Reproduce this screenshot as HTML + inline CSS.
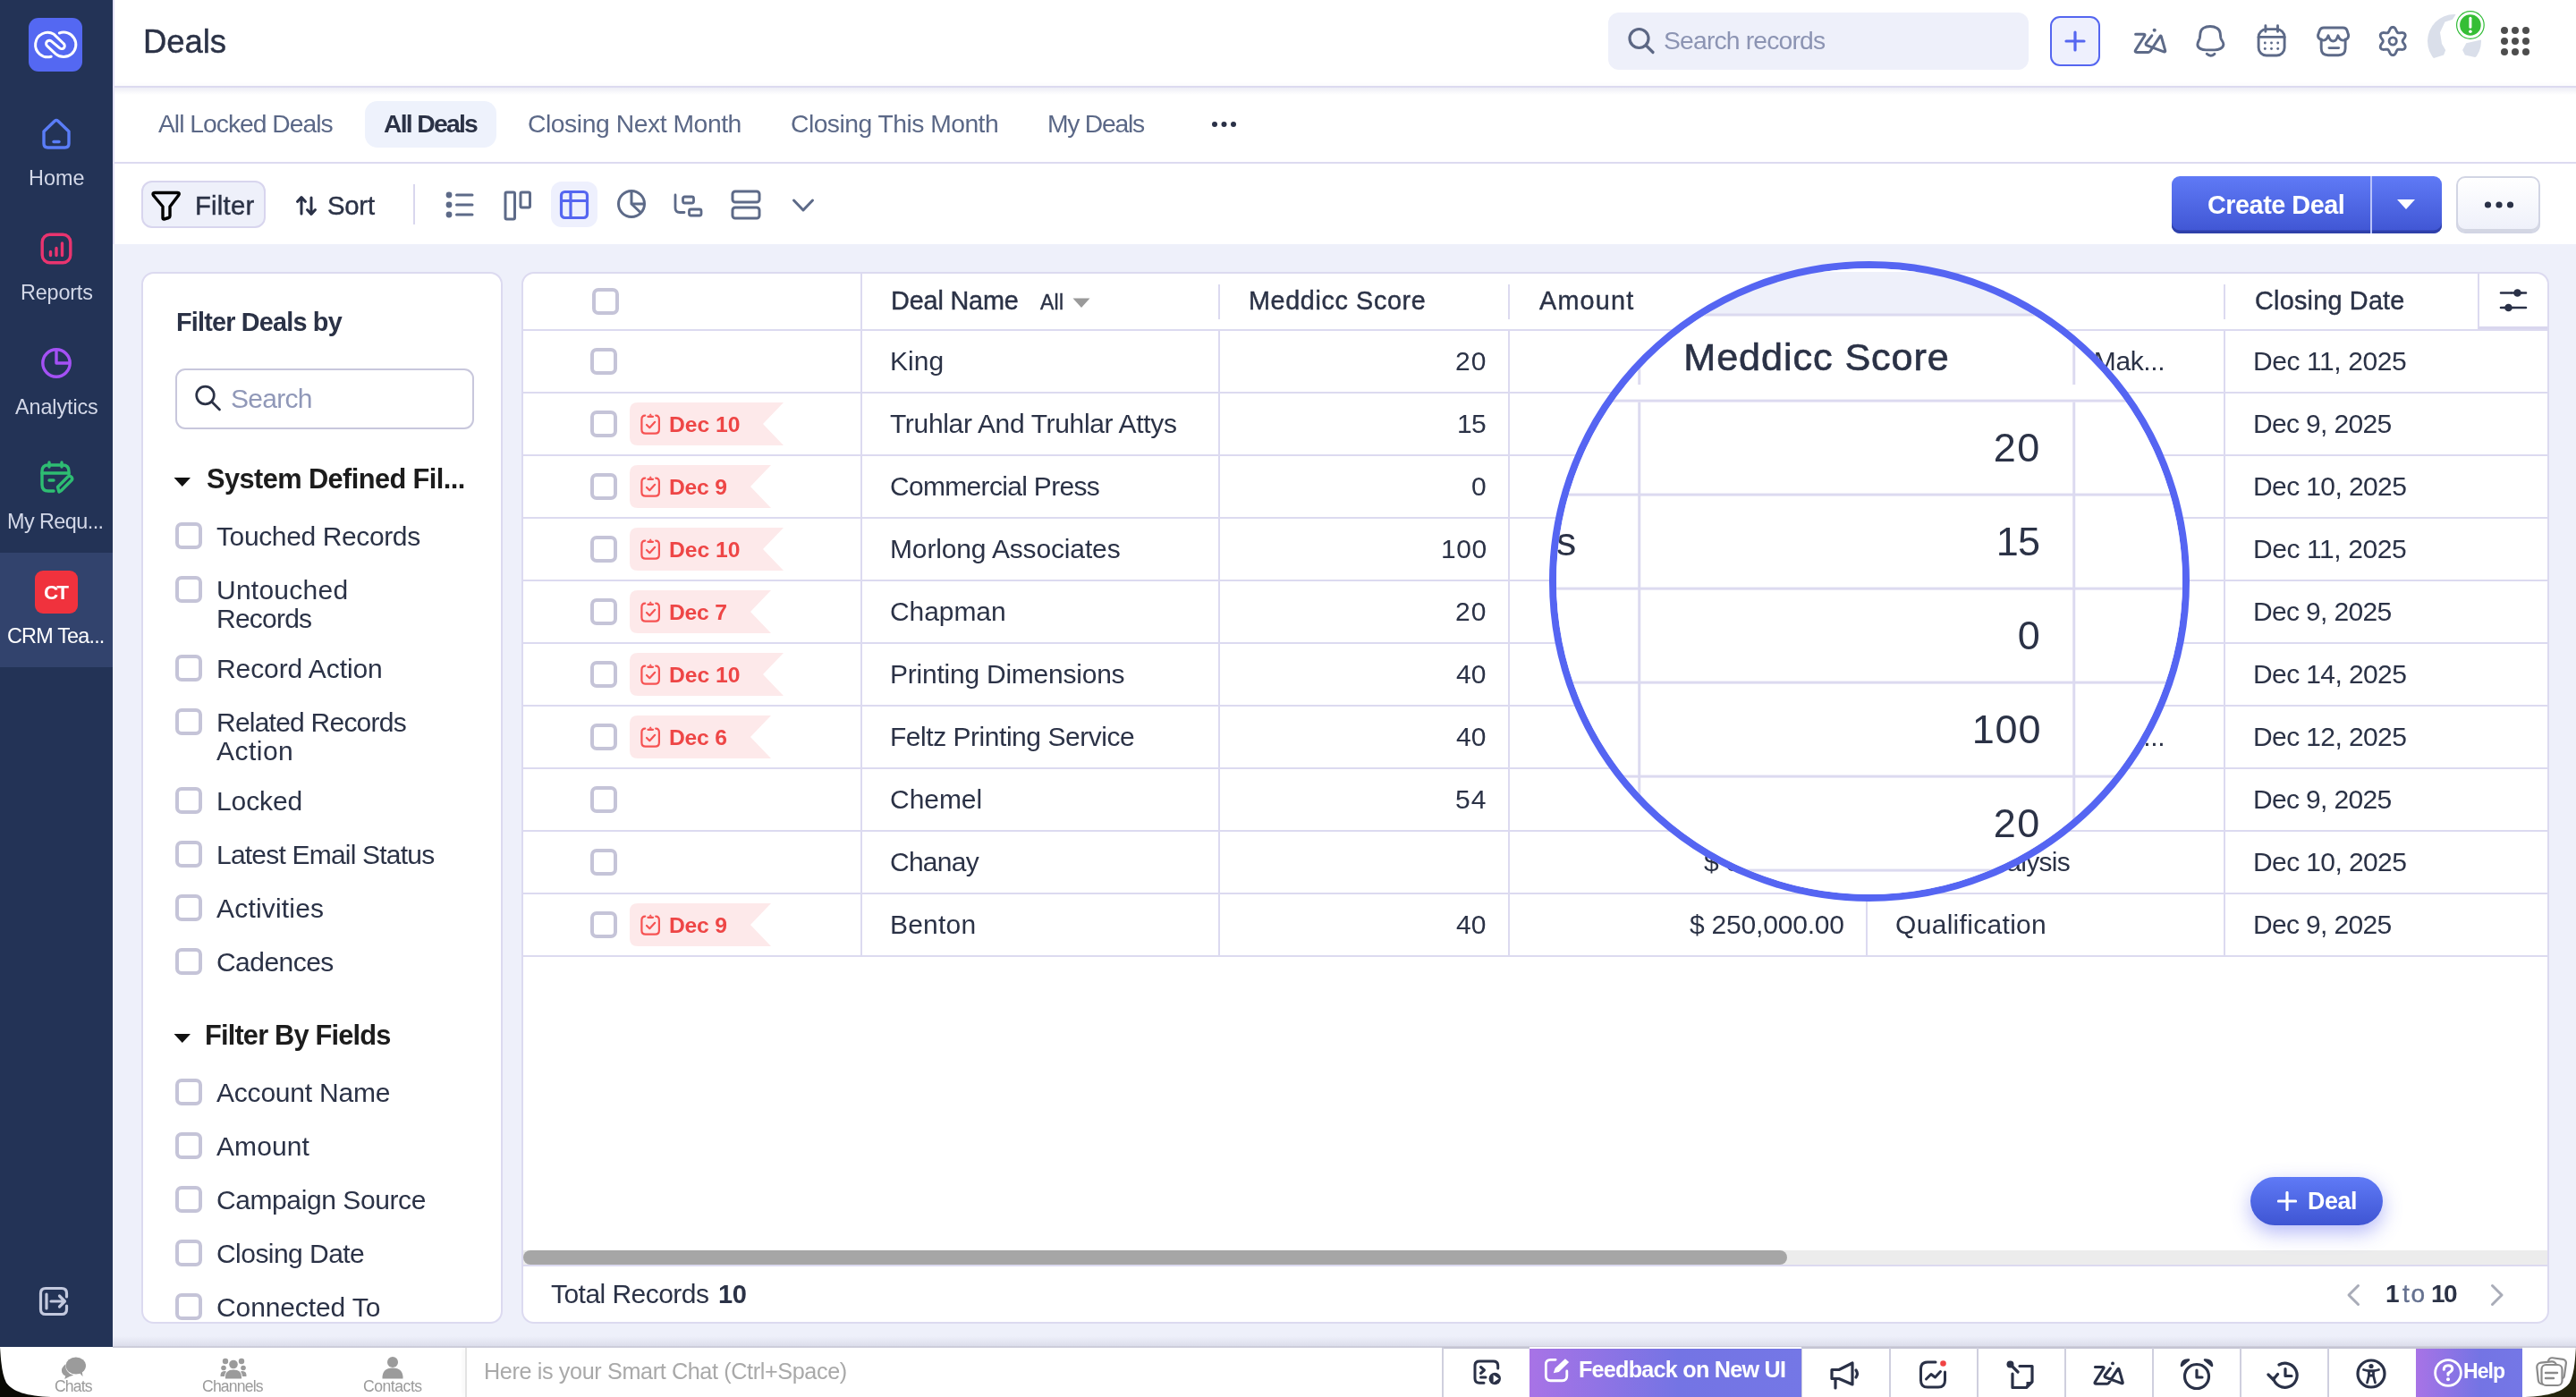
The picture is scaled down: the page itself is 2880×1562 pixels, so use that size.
<!DOCTYPE html>
<html lang="en"><head><meta charset="utf-8"><title>Deals - Zoho CRM</title>
<style>
*{margin:0;padding:0;box-sizing:border-box}
html,body{width:2880px;height:1562px;background:#eef0fa}
body{font-family:"Liberation Sans", sans-serif;color:#2b3246;position:relative}
#root{position:absolute;left:0;top:0;width:2880px;height:1562px;overflow:hidden;-webkit-font-smoothing:antialiased}
#root div,#root span,#root svg{position:absolute}
#root span{white-space:nowrap;display:block;will-change:transform}
.cb{width:30px;height:30px;border:4px solid #c5c4d8;border-radius:7px;background:#fff}
.m{-webkit-text-stroke:0.42px currentColor}
</style></head>
<body><div id="root">
<div style="left:126px;top:0px;width:2754px;height:97px;background:#fff;"></div>
<div style="left:126px;top:96px;width:2754px;height:2px;background:#dcdaf0;box-shadow:0 2px 6px rgba(120,120,180,.18);"></div>
<div style="left:126px;top:98px;width:2754px;height:83px;background:#fff;"></div>
<div style="left:126px;top:181px;width:2754px;height:2px;background:#dcdaf0;"></div>
<div style="left:126px;top:183px;width:2754px;height:90px;background:#fff;"></div>
<div style="left:126px;top:98px;width:2754px;height:8px;background:linear-gradient(rgba(120,120,180,.13),rgba(120,120,180,0));"></div>
<div style="left:126px;top:0px;width:2px;height:273px;background:#e4e2f6;"></div>
<div style="left:0px;top:0px;width:126px;height:1506px;background:#233356;"></div>
<div style="left:0px;top:618px;width:126px;height:128px;background:#32436d;"></div>
<div style="left:32px;top:20px;width:60px;height:60px;background:#5468f2;border-radius:11px;"></div>
<svg style="left:32px;top:20px;" width="60" height="60" viewBox="0 0 60 60" fill="none"><path d="M25.2 43.2 A13.7 13.7 0 1 1 28.3 18.3 L39.12 28.77 A3.3 3.3 0 0 1 34.88 33.83 L25.5 26.1 A3.6 3.6 0 0 0 20.9 31.66 L30.3 40.3 A13.7 13.7 0 1 0 34.35 17" stroke="#fff" stroke-width="3" stroke-linecap="round" stroke-linejoin="round" fill="none"/></svg>
<svg style="left:45px;top:131px;" width="36" height="38" viewBox="0 0 36 38" fill="none"><path d="M4 16 L16.2 4.2 Q18 2.6 19.8 4.2 L32 16 V29.5 Q32 34 27.5 34 H8.5 Q4 34 4 29.5 Z" stroke="#5a7df8" stroke-width="3.4" stroke-linejoin="round"/>
<path d="M15 27.5 H21" stroke="#5a7df8" stroke-width="3.4" stroke-linecap="round"/></svg>
<span style="left:32.45px;top:181.06px;line-height:36px;font-size:23.4px;color:#d3d8e8;letter-spacing:0.033px;">Home</span>
<svg style="left:45px;top:260px;" width="36" height="36" viewBox="0 0 36 36" fill="none"><rect x="2.2" y="2.2" width="31.6" height="31.6" rx="8.5" stroke="#e9346f" stroke-width="3.4"/>
<path d="M11.5 25.5 V21.5 M18 25.5 V17.5 M24.5 25.5 V12" stroke="#e9346f" stroke-width="3.4" stroke-linecap="round"/></svg>
<span style="left:22.50px;top:309.06px;line-height:36px;font-size:23.4px;color:#d3d8e8;letter-spacing:-0.167px;">Reports</span>
<svg style="left:45px;top:388px;" width="36" height="36" viewBox="0 0 36 36" fill="none"><circle cx="18" cy="18" r="15.2" stroke="#a451f5" stroke-width="3.4"/>
<path d="M18 3 V18 H33" stroke="#a451f5" stroke-width="3.4" stroke-linejoin="round" fill="none"/></svg>
<span style="left:17.20px;top:437.06px;line-height:36px;font-size:23.4px;color:#d3d8e8;letter-spacing:-0.100px;">Analytics</span>
<svg style="left:44px;top:515px;" width="40" height="38" viewBox="0 0 40 38" fill="none"><g stroke="#2ebd72" stroke-width="3.4" stroke-linecap="round" stroke-linejoin="round" fill="none">
<path d="M16 34 H10 Q3 34 3 27 V12 Q3 5 10 5 H26 Q33 5 33 12 V15"/>
<path d="M3 14 H33"/><path d="M11 2 V7 M25 2 V7"/><path d="M11 22 H16"/>
<path d="M22 35 L20.5 29.5 L32 18 Q34 16.5 36 18.5 Q37.5 20.5 36 22 L24.5 33.5 Z"/></g></svg>
<span style="left:7.50px;top:565.06px;line-height:36px;font-size:23.4px;color:#d3d8e8;letter-spacing:-0.556px;">My Requ...</span>
<div style="left:39px;top:638px;width:48px;height:48px;background:#f0323d;border-radius:9px;"></div>
<span style="left:49.20px;top:647.56px;line-height:30px;font-size:22.5px;color:#fff;font-weight:700;letter-spacing:-2.100px;">CT</span>
<span style="left:7.60px;top:693.06px;line-height:36px;font-size:23.4px;color:#fff;letter-spacing:-0.800px;">CRM Tea...</span>
<svg style="left:43px;top:1437.5px;" width="35" height="35" viewBox="0 0 35 35" fill="none"><g stroke="#c3c9de" stroke-width="3.2" stroke-linecap="round" stroke-linejoin="round" fill="none">
<path d="M31.5 12 V8 Q31.5 2.5 26 2.5 H8 Q2.5 2.5 2.5 8 V26 Q2.5 31.5 8 31.5 H26 Q31.5 31.5 31.5 26 V22"/>
<path d="M9 9 V25"/><path d="M14 17 H29 M23.5 11 L29.5 17 L23.5 23"/></g></svg>
<span class="m" style="left:159.80px;top:21.56px;line-height:50px;font-size:36.5px;color:#2b3246;letter-spacing:-0.100px;">Deals</span>
<div style="left:1798px;top:14px;width:470px;height:64px;background:#eef0fa;border-radius:12px;"></div>
<svg style="left:1818px;top:28px;" width="36" height="36" viewBox="0 0 36 36" fill="none"><circle cx="14.5" cy="15" r="10.5" stroke="#5c6784" stroke-width="3.2"/><path d="M22.5 23 L30 30.5" stroke="#5c6784" stroke-width="3.2" stroke-linecap="round"/></svg>
<span style="left:1860.00px;top:25.06px;line-height:40px;font-size:28.3px;color:#8c94b3;letter-spacing:-0.823px;">Search records</span>
<div style="left:2292px;top:18px;width:56px;height:56px;background:#eef0fd;border:2.5px solid #5566f0;border-radius:11px;"></div>
<svg style="left:2292px;top:18px;" width="56" height="56" viewBox="0 0 56 56" fill="none"><path d="M28 18 V38 M18 28 H38" stroke="#5566f0" stroke-width="3.2" stroke-linecap="round"/></svg>
<svg style="left:2385px;top:28px;" width="38" height="34" viewBox="0 0 38 34" fill="none"><path d="M2.6 10.2 H11.5 Q13.8 10.2 12.6 12.2 L2.6 28 Q1.2 30.4 4 30.4 H17 Q18.3 30.4 19 29.3 L30 12.6 Q30.8 11.4 31.3 12.8 L35.7 28.4 Q36.2 30.4 34.2 29.8 L15.6 22.9 Q13.2 22 14.5 19.9 L20.8 11.8" stroke="#5d6a88" stroke-width="3" stroke-linecap="round" stroke-linejoin="round" fill="none"/>
<circle cx="23.7" cy="5.8" r="2.05" fill="#5d6a88"/></svg>
<svg style="left:2453px;top:26px;" width="36" height="40" viewBox="0 0 36 40" fill="none"><g stroke="#5d6a88" stroke-width="2.9" stroke-linecap="round" stroke-linejoin="round" fill="none">
<path d="M18 3.5 C24 3.5 28.6 6.5 29.2 11 L29.8 16.4 C30.2 19 32.9 20.5 32.9 23.5 C32.9 28 27 29.9 23 29.9 H13.5 C9 29.9 3.6 28 3.9 23.5 C4 20.5 6 19 6.4 16.4 L7 11 C7.6 6.5 12 3.5 18 3.5 Z"/>
<path d="M14.3 34.3 Q18.5 38.2 22.9 34.3"/></g></svg>
<svg style="left:2522px;top:27px;" width="36" height="38" viewBox="0 0 36 38" fill="none"><g stroke="#5d6a88" stroke-width="2.9" stroke-linecap="round" stroke-linejoin="round" fill="none">
<rect x="3.1" y="5.6" width="29" height="29.4" rx="8.8"/><path d="M3.1 14.4 H32.1"/><path d="M10.9 1.8 V8.3 M24.5 1.8 V8.3"/></g>
<g fill="#5d6a88"><circle cx="10.3" cy="21" r="1.45"/><circle cx="17.5" cy="21" r="1.45"/><circle cx="24.7" cy="21" r="1.45"/>
<circle cx="10.3" cy="27.5" r="1.45"/><circle cx="17.5" cy="27.5" r="1.45"/><circle cx="24.7" cy="27.5" r="1.45"/></g></svg>
<svg style="left:2590px;top:28px;" width="38" height="36" viewBox="0 0 38 36" fill="none"><g stroke="#5d6a88" stroke-width="2.9" stroke-linecap="round" stroke-linejoin="round" fill="none">
<path d="M5.2 16.5 Q1 15 1.6 11 L3.4 6 Q4.5 3 8 3 H29.5 Q33 3 34 6 L35.6 11 Q36 15 32.1 16.5"/>
<path d="M5.2 16 V26 Q5.2 33.7 13 33.7 H24.3 Q32.1 33.7 32.1 26 V16"/>
<path d="M5.2 16.5 Q10.5 19 13.1 11.8 Q15 18 18.5 18 Q22 18 23.9 11.8 Q26.5 19 32.1 16.5"/>
<path d="M14 25.6 H24.7"/></g></svg>
<svg style="left:2657px;top:28px;" width="36" height="36" viewBox="0 0 36 36" fill="none"><path d="M29.10 18.00 L29.25 18.72 L29.66 19.51 L30.26 20.40 L31.05 21.44 L31.74 22.60 L32.10 23.76 L32.13 24.87 L31.80 25.85 L31.11 26.63 L30.14 27.16 L28.95 27.43 L27.60 27.40 L26.31 27.25 L25.23 27.17 L24.35 27.20 L23.65 27.44 L23.10 27.93 L22.62 28.68 L22.15 29.64 L21.64 30.85 L20.99 32.03 L20.16 32.92 L19.22 33.50 L18.20 33.70 L17.18 33.50 L16.24 32.92 L15.41 32.03 L14.76 30.85 L14.25 29.64 L13.78 28.68 L13.30 27.93 L12.75 27.44 L12.05 27.20 L11.17 27.17 L10.09 27.25 L8.80 27.40 L7.45 27.43 L6.26 27.16 L5.29 26.63 L4.60 25.85 L4.27 24.87 L4.30 23.76 L4.66 22.60 L5.35 21.44 L6.14 20.40 L6.74 19.51 L7.15 18.72 L7.30 18.00 L7.15 17.28 L6.74 16.49 L6.14 15.60 L5.35 14.56 L4.66 13.40 L4.30 12.24 L4.27 11.13 L4.60 10.15 L5.29 9.37 L6.26 8.84 L7.45 8.57 L8.80 8.60 L10.09 8.75 L11.17 8.83 L12.05 8.80 L12.75 8.56 L13.30 8.07 L13.78 7.32 L14.25 6.36 L14.76 5.15 L15.41 3.97 L16.24 3.08 L17.18 2.50 L18.20 2.30 L19.22 2.50 L20.16 3.08 L20.99 3.97 L21.64 5.15 L22.15 6.36 L22.62 7.32 L23.10 8.07 L23.65 8.56 L24.35 8.80 L25.23 8.83 L26.31 8.75 L27.60 8.60 L28.95 8.57 L30.14 8.84 L31.11 9.37 L31.80 10.15 L32.13 11.13 L32.10 12.24 L31.74 13.40 L31.05 14.56 L30.26 15.60 L29.66 16.49 L29.25 17.28 Z" stroke="#5d6a88" stroke-width="2.9" stroke-linejoin="round"/><circle cx="18.2" cy="18" r="4.1" stroke="#5d6a88" stroke-width="2.9"/></svg>
<svg style="left:2710px;top:10px;" width="70" height="62" viewBox="0 0 70 62" fill="none"><defs><clipPath id="avc"><circle cx="34" cy="36" r="30"/></clipPath></defs>
<circle cx="34" cy="36" r="30" fill="#dadfea"/>
<path d="M35.4 0 L35.4 6.4 L31.9 11.7 L23.5 14.5 L18 26.3 L20 38.9 L24.2 45.9 L22.1 51.5 L11 55 L-2 72 H72 V-2 Z" fill="#fff"/>
<g clip-path="url(#avc)"><path d="M47.3 38.2 L66 34 V50 L57.1 53.9 L45.9 51.5 L43.1 45.9 Z" fill="#dadfea"/></g>
<circle cx="51.9" cy="18" r="17.6" fill="#fff"/>
<circle cx="51.9" cy="18" r="15.3" fill="none" stroke="#2fbb35" stroke-width="1.2"/>
<circle cx="51.9" cy="18" r="11.8" fill="#35be35"/>
<path d="M51.9 10.3 V20.3" stroke="#fff" stroke-width="3" stroke-linecap="round"/><circle cx="51.9" cy="25.3" r="1.8" fill="#fff"/></svg>
<svg style="left:2795px;top:29px;" width="34" height="34" viewBox="0 0 34 34" fill="none"><circle cx="5" cy="5" r="4" fill="#4d4d4d"/><circle cx="5" cy="17" r="4" fill="#4d4d4d"/><circle cx="5" cy="29" r="4" fill="#4d4d4d"/><circle cx="17" cy="5" r="4" fill="#4d4d4d"/><circle cx="17" cy="17" r="4" fill="#4d4d4d"/><circle cx="17" cy="29" r="4" fill="#4d4d4d"/><circle cx="29" cy="5" r="4" fill="#4d4d4d"/><circle cx="29" cy="17" r="4" fill="#4d4d4d"/><circle cx="29" cy="29" r="4" fill="#4d4d4d"/></svg>
<div style="left:408px;top:113px;width:147px;height:52px;background:#eef2fc;border-radius:14px;"></div>
<span style="left:176.90px;top:118.06px;line-height:40px;font-size:28.3px;color:#5b6887;letter-spacing:-1.007px;">All Locked Deals</span>
<span style="left:428.70px;top:118.06px;line-height:40px;font-size:28.3px;color:#2b3246;font-weight:700;letter-spacing:-1.713px;">All Deals</span>
<span style="left:590.00px;top:118.06px;line-height:40px;font-size:28.3px;color:#5b6887;letter-spacing:-0.447px;">Closing Next Month</span>
<span style="left:884.00px;top:118.06px;line-height:40px;font-size:28.3px;color:#5b6887;letter-spacing:-0.529px;">Closing This Month</span>
<span style="left:1170.80px;top:118.06px;line-height:40px;font-size:28.3px;color:#5b6887;letter-spacing:-1.257px;">My Deals</span>
<svg style="left:1354px;top:134px;" width="30" height="10" viewBox="0 0 30 10" fill="none"><circle cx="4" cy="5" r="3" fill="#2a3147"/><circle cx="14.500" cy="5" r="3" fill="#2a3147"/><circle cx="25" cy="5" r="3" fill="#2a3147"/></svg>
<div style="left:158px;top:202px;width:139px;height:53px;background:#eef0fa;border:2px solid #d8d5ee;border-radius:12px;"></div>
<svg style="left:168px;top:211px;" width="36" height="38" viewBox="0 0 36 38" fill="none"><path d="M5 4.500 H30.500 Q33.500 4.500 31.500 7.500 L22 20 V30.500 Q22 32 20.500 32.500 L15.500 34 Q14 34.300 14 32.500 V20 L3.500 7.500 Q2 4.500 5 4.500 Z" stroke="#000" stroke-width="3.400" stroke-linejoin="round"/></svg>
<span class="m" style="left:217.80px;top:209.56px;line-height:40px;font-size:29.3px;color:#2b3246;letter-spacing:0.220px;">Filter</span>
<svg style="left:330px;top:217px;" width="26" height="26" viewBox="0 0 26 26" fill="none"><g stroke="#2a3147" stroke-width="3" stroke-linecap="round" stroke-linejoin="round" fill="none">
<path d="M7 22 V4 M2.5 8.5 L7 3.5 L11.5 8.5"/><path d="M18 4 V22 M13.5 17.5 L18 22.5 L22.5 17.5"/></g></svg>
<span class="m" style="left:365.50px;top:209.56px;line-height:40px;font-size:29.3px;color:#2b3246;letter-spacing:-0.233px;">Sort</span>
<div style="left:462px;top:206px;width:2px;height:45px;background:#d9d7ee;"></div>
<svg style="left:497px;top:212px;" width="34" height="34" viewBox="0 0 34 34" fill="none"><g fill="#5d6a88"><circle cx="5" cy="6" r="3.400"/><circle cx="5" cy="17" r="3.400"/><circle cx="5" cy="28" r="3.400"/></g>
<path d="M13.500 6 H31 M13.500 17 H31 M13.500 28 H31" stroke="#5d6a88" stroke-width="3" stroke-linecap="round"/></svg>
<svg style="left:563px;top:213px;" width="32" height="34" viewBox="0 0 32 34" fill="none"><rect x="2" y="2" width="10.500" height="30" rx="1.500" stroke="#5d6a88" stroke-width="3"/><rect x="19" y="2" width="10.500" height="17" rx="1.500" stroke="#5d6a88" stroke-width="3"/></svg>
<div style="left:616px;top:203px;width:52px;height:51px;background:#eef0fd;border-radius:12px;"></div>
<svg style="left:625px;top:212px;" width="34" height="34" viewBox="0 0 34 34" fill="none"><rect x="2.500" y="2.500" width="29" height="29" rx="4" stroke="#5566f0" stroke-width="3.200"/><path d="M2.500 12.500 H31.500 M13 2.500 V31.500" stroke="#5566f0" stroke-width="3.200"/></svg>
<svg style="left:689px;top:211px;" width="34" height="34" viewBox="0 0 34 34" fill="none"><circle cx="17" cy="17" r="14.500" stroke="#5d6a88" stroke-width="3"/><path d="M17 2.500 V17 L27.500 27" stroke="#5d6a88" stroke-width="3" stroke-linejoin="round" fill="none"/><path d="M17 17 H31.500" stroke="#5d6a88" stroke-width="3"/></svg>
<svg style="left:753px;top:213px;" width="34" height="32" viewBox="0 0 34 32" fill="none"><g stroke="#5d6a88" stroke-width="2.800" stroke-linecap="round" stroke-linejoin="round" fill="none">
<path d="M2 5 V19.500 Q2 24.500 7 24.500 H12"/><rect x="10.500" y="7" width="12" height="7" rx="2"/><rect x="17.500" y="21" width="13.500" height="7" rx="2"/></g></svg>
<svg style="left:817px;top:212px;" width="34" height="34" viewBox="0 0 34 34" fill="none"><rect x="2" y="2" width="30" height="12" rx="3" stroke="#5d6a88" stroke-width="3"/><rect x="2" y="20" width="30" height="12" rx="3" stroke="#5d6a88" stroke-width="3"/></svg>
<svg style="left:885px;top:221px;" width="26" height="18" viewBox="0 0 26 18" fill="none"><path d="M2.500 3 L13 14 L23.500 3" stroke="#5d6a88" stroke-width="3" stroke-linecap="round" stroke-linejoin="round"/></svg>
<div style="left:2428px;top:197px;width:302px;height:64px;background:linear-gradient(#5f7af6,#3f55d3);border-radius:9px;box-shadow:inset 0 -3.5px 0 #2f40aa;"></div>
<div style="left:2650px;top:197px;width:2px;height:64px;background:#b9c3fa;"></div>
<span style="left:2467.70px;top:209.06px;line-height:40px;font-size:28.8px;color:#fff;font-weight:700;letter-spacing:-0.470px;">Create Deal</span>
<svg style="left:2678px;top:221px;" width="24" height="14" viewBox="0 0 24 14" fill="none"><path d="M2 2 H22 L12 13 Z" fill="#fff"/></svg>
<div style="left:2746px;top:197px;width:94px;height:64px;background:linear-gradient(#fff,#eef0fa);border:2px solid #d2d5e4;border-radius:10px;box-shadow:inset 0 -3px 0 #d3d6e3;"></div>
<svg style="left:2777px;top:224px;" width="34" height="10" viewBox="0 0 34 10" fill="none"><circle cx="4.500" cy="5" r="3.600" fill="#2a3147"/><circle cx="17" cy="5" r="3.600" fill="#2a3147"/><circle cx="29.500" cy="5" r="3.600" fill="#2a3147"/></svg>
<div style="left:158px;top:304px;width:404px;height:1176px;background:#fff;border:2px solid #dcdaf0;border-radius:14px;"></div>
<span style="left:196.60px;top:340.06px;line-height:40px;font-size:28.8px;color:#2b3246;font-weight:700;letter-spacing:-0.800px;">Filter Deals by</span>
<div style="left:196px;top:412px;width:334px;height:68px;background:#fff;border:2.500px solid #c8c7dc;border-radius:11px;"></div>
<svg style="left:217px;top:429px;" width="32" height="32" viewBox="0 0 32 32" fill="none"><circle cx="12.500" cy="13" r="9.800" stroke="#2b3246" stroke-width="2.700"/><path d="M20 20.500 L28.500 29" stroke="#2b3246" stroke-width="2.700" stroke-linecap="round"/></svg>
<span style="left:258.30px;top:425.56px;line-height:40px;font-size:30px;color:#9098b8;letter-spacing:-0.700px;">Search</span>
<svg style="left:194px;top:533.0px;" width="20" height="12" viewBox="0 0 20 12" fill="none"><path d="M0.500 1 H19 L9.800 11 Z" fill="#111"/></svg>
<span style="left:230.90px;top:515.56px;line-height:40px;font-size:30.8px;color:#1c1c1c;font-weight:700;letter-spacing:-0.600px;">System Defined Fil...</span>
<div class="cb" style="left:196px;top:584px;"></div>
<span style="left:242.00px;top:579.56px;line-height:40px;font-size:30px;color:#2b3246;letter-spacing:-0.379px;">Touched Records</span>
<div class="cb" style="left:196px;top:644px;"></div>
<span style="left:242.00px;top:639.56px;line-height:40px;font-size:30px;color:#2b3246;letter-spacing:0.250px;">Untouched</span>
<span style="left:242.00px;top:671.56px;line-height:40px;font-size:30px;color:#2b3246;letter-spacing:-0.767px;">Records</span>
<div class="cb" style="left:196px;top:732px;"></div>
<span style="left:242.00px;top:727.56px;line-height:40px;font-size:30px;color:#2b3246;letter-spacing:-0.083px;">Record Action</span>
<div class="cb" style="left:196px;top:792px;"></div>
<span style="left:242.00px;top:787.56px;line-height:40px;font-size:30px;color:#2b3246;letter-spacing:-0.771px;">Related Records</span>
<span style="left:242.00px;top:819.56px;line-height:40px;font-size:30px;color:#2b3246;letter-spacing:0.480px;">Action</span>
<div class="cb" style="left:196px;top:880px;"></div>
<span style="left:242.00px;top:875.56px;line-height:40px;font-size:30px;color:#2b3246;letter-spacing:-0.120px;">Locked</span>
<div class="cb" style="left:196px;top:940px;"></div>
<span style="left:242.00px;top:935.56px;line-height:40px;font-size:30px;color:#2b3246;letter-spacing:-0.794px;">Latest Email Status</span>
<div class="cb" style="left:196px;top:1000px;"></div>
<span style="left:242.00px;top:995.56px;line-height:40px;font-size:30px;color:#2b3246;letter-spacing:0.189px;">Activities</span>
<div class="cb" style="left:196px;top:1060px;"></div>
<span style="left:242.00px;top:1055.56px;line-height:40px;font-size:30px;color:#2b3246;letter-spacing:-0.543px;">Cadences</span>
<svg style="left:194px;top:1155.0px;" width="20" height="12" viewBox="0 0 20 12" fill="none"><path d="M0.500 1 H19 L9.800 11 Z" fill="#111"/></svg>
<span style="left:228.90px;top:1137.56px;line-height:40px;font-size:30.8px;color:#1c1c1c;font-weight:700;letter-spacing:-0.827px;">Filter By Fields</span>
<div class="cb" style="left:196px;top:1206px;"></div>
<span style="left:242.00px;top:1201.56px;line-height:40px;font-size:30px;color:#2b3246;letter-spacing:-0.209px;">Account Name</span>
<div class="cb" style="left:196px;top:1266px;"></div>
<span style="left:242.00px;top:1261.56px;line-height:40px;font-size:30px;color:#2b3246;letter-spacing:0.080px;">Amount</span>
<div class="cb" style="left:196px;top:1326px;"></div>
<span style="left:242.00px;top:1321.56px;line-height:40px;font-size:30px;color:#2b3246;letter-spacing:-0.414px;">Campaign Source</span>
<div class="cb" style="left:196px;top:1386px;"></div>
<span style="left:242.00px;top:1381.56px;line-height:40px;font-size:30px;color:#2b3246;letter-spacing:-0.545px;">Closing Date</span>
<div class="cb" style="left:196px;top:1446px;"></div>
<span style="left:242.00px;top:1441.56px;line-height:40px;font-size:30px;color:#2b3246;letter-spacing:-0.109px;">Connected To</span>
<div style="left:583px;top:304px;width:2267px;height:1176px;background:#fff;border:2px solid #dcdaf0;border-radius:14px;"></div>
<div style="left:585px;top:368px;width:2263px;height:2px;background:#dcdaf0;"></div>
<div style="left:585px;top:438px;width:2263px;height:2px;background:#dcdaf0;"></div>
<div style="left:585px;top:508px;width:2263px;height:2px;background:#dcdaf0;"></div>
<div style="left:585px;top:578px;width:2263px;height:2px;background:#dcdaf0;"></div>
<div style="left:585px;top:648px;width:2263px;height:2px;background:#dcdaf0;"></div>
<div style="left:585px;top:718px;width:2263px;height:2px;background:#dcdaf0;"></div>
<div style="left:585px;top:788px;width:2263px;height:2px;background:#dcdaf0;"></div>
<div style="left:585px;top:858px;width:2263px;height:2px;background:#dcdaf0;"></div>
<div style="left:585px;top:928px;width:2263px;height:2px;background:#dcdaf0;"></div>
<div style="left:585px;top:998px;width:2263px;height:2px;background:#dcdaf0;"></div>
<div style="left:585px;top:1068px;width:2263px;height:2px;background:#dcdaf0;"></div>
<div style="left:962px;top:306px;width:2px;height:764px;background:#dcdaf0;"></div>
<div style="left:1362px;top:318px;width:2px;height:39px;background:#dcdaf0;"></div>
<div style="left:1362px;top:370px;width:2px;height:700px;background:#dcdaf0;"></div>
<div style="left:1686px;top:318px;width:2px;height:39px;background:#dcdaf0;"></div>
<div style="left:1686px;top:370px;width:2px;height:700px;background:#dcdaf0;"></div>
<div style="left:2086px;top:318px;width:2px;height:39px;background:#dcdaf0;"></div>
<div style="left:2086px;top:370px;width:2px;height:700px;background:#dcdaf0;"></div>
<div style="left:2486px;top:318px;width:2px;height:39px;background:#dcdaf0;"></div>
<div style="left:2486px;top:370px;width:2px;height:700px;background:#dcdaf0;"></div>
<div class="cb" style="left:662px;top:322px;"></div>
<span class="m" style="left:995.90px;top:316.06px;line-height:40px;font-size:28.8px;color:#2b3246;letter-spacing:-0.150px;">Deal Name</span>
<span class="m" style="left:1163.30px;top:318.06px;line-height:40px;font-size:23px;color:#2b3246;letter-spacing:0.250px;">All</span>
<svg style="left:1199px;top:333px;" width="20" height="12" viewBox="0 0 20 12" fill="none"><path d="M0.500 0.500 H19.500 L10 11 Z" fill="#9a9a9a"/></svg>
<span class="m" style="left:1396.00px;top:316.06px;line-height:40px;font-size:28.8px;color:#2b3246;letter-spacing:0.608px;">Meddicc Score</span>
<span class="m" style="left:1720.50px;top:316.06px;line-height:40px;font-size:28.8px;color:#2b3246;letter-spacing:1.200px;">Amount</span>
<span class="m" style="left:2120.00px;top:316.06px;line-height:40px;font-size:28.8px;color:#2b3246;letter-spacing:-0.750px;">Stage</span>
<span class="m" style="left:2520.50px;top:316.06px;line-height:40px;font-size:28.8px;color:#2b3246;letter-spacing:0.227px;">Closing Date</span>
<div style="left:2770px;top:306px;width:78px;height:62px;background:#fff;border-left:2px solid #dcdaf0;border-bottom:3px solid #d9d6ee;border-top-right-radius:16px;"></div>
<svg style="left:2794px;top:322px;" width="32" height="28" viewBox="0 0 32 28" fill="none"><path d="M2 5.500 H13 M26 5.500 H30 M2 22 H5 M17 22 H30" stroke="#2a3147" stroke-width="2.600" stroke-linecap="round"/>
<circle cx="20.500" cy="5.500" r="4.300" fill="#2a3147"/><circle cx="10.500" cy="22" r="4.300" fill="#2a3147"/><path d="M13 5.500 H26 M5 22 H17" stroke="#2a3147" stroke-width="2.600"/></svg>
<div class="cb" style="left:660px;top:389px;"></div>
<span style="left:994.80px;top:383.56px;line-height:40px;font-size:30px;color:#2b3246;letter-spacing:0.067px;">King</span>
<span style="left:1627.20px;top:383.56px;line-height:40px;font-size:30px;color:#2b3246;letter-spacing:1.000px;">20</span>
<span style="left:1904.50px;top:383.56px;line-height:40px;font-size:30px;color:#2b3246;letter-spacing:-0.170px;">$ 60,000.00</span>
<span style="right:459.40px;top:383.56px;line-height:40px;font-size:30px;color:#2b3246;letter-spacing:-0.400px;">Id. Decision Mak...</span>
<span style="left:2518.60px;top:383.56px;line-height:40px;font-size:30px;color:#2b3246;letter-spacing:-0.418px;">Dec 11, 2025</span>
<div class="cb" style="left:660px;top:459px;"></div>
<svg style="left:704px;top:450px;" width="172" height="48" viewBox="0 0 172 48"><path d="M9 0 H172 L149 24 L172 48 H9 Q0 48 0 39 V9 Q0 0 9 0 Z" fill="#fde9ea"/></svg><svg style="left:716px;top:460px;" width="24" height="28" viewBox="0 0 24 28" fill="none"><g stroke="#f65353" stroke-width="2.200" stroke-linecap="round" stroke-linejoin="round" fill="none">
<path d="M5.200 4.600 Q1.400 4.600 1.400 9 V20.200 Q1.400 24.600 5.800 24.600 H16.500 Q20.900 24.600 20.900 20.200 V9 Q20.900 4.600 17.200 4.600"/>
<path d="M8.400 5.800 H14"/><path d="M7 15 L10.300 18.200 L16.200 11.800"/></g><path d="M9.300 4.800 L11.200 2.300 L13.100 4.800 Z" fill="#f65353"/></svg><span style="left:748.00px;top:458.56px;line-height:32px;font-size:24.7px;color:#ee4646;font-weight:700;letter-spacing:-0.040px;">Dec 10</span>
<span style="left:994.80px;top:453.56px;line-height:40px;font-size:30px;color:#2b3246;letter-spacing:-0.337px;">Truhlar And Truhlar Attys</span>
<span style="left:1628.80px;top:453.56px;line-height:40px;font-size:30px;color:#2b3246;letter-spacing:-0.600px;">15</span>
<span style="left:1904.50px;top:453.56px;line-height:40px;font-size:30px;color:#2b3246;letter-spacing:-0.170px;">$ 45,000.00</span>
<span style="left:2119.30px;top:453.56px;line-height:40px;font-size:30px;color:#2b3246;letter-spacing:-2.144px;">Closed Won</span>
<span style="left:2518.60px;top:453.56px;line-height:40px;font-size:30px;color:#2b3246;letter-spacing:-0.660px;">Dec 9, 2025</span>
<div class="cb" style="left:660px;top:529px;"></div>
<svg style="left:704px;top:520px;" width="158" height="48" viewBox="0 0 158 48"><path d="M9 0 H158 L135 24 L158 48 H9 Q0 48 0 39 V9 Q0 0 9 0 Z" fill="#fde9ea"/></svg><svg style="left:716px;top:530px;" width="24" height="28" viewBox="0 0 24 28" fill="none"><g stroke="#f65353" stroke-width="2.200" stroke-linecap="round" stroke-linejoin="round" fill="none">
<path d="M5.200 4.600 Q1.400 4.600 1.400 9 V20.200 Q1.400 24.600 5.800 24.600 H16.500 Q20.900 24.600 20.900 20.200 V9 Q20.900 4.600 17.200 4.600"/>
<path d="M8.400 5.800 H14"/><path d="M7 15 L10.300 18.200 L16.200 11.800"/></g><path d="M9.300 4.800 L11.200 2.300 L13.100 4.800 Z" fill="#f65353"/></svg><span style="left:748.00px;top:528.56px;line-height:32px;font-size:24.7px;color:#ee4646;font-weight:700;letter-spacing:-0.250px;">Dec 9</span>
<span style="left:994.80px;top:523.56px;line-height:40px;font-size:30px;color:#2b3246;letter-spacing:-0.680px;">Commercial Press</span>
<span style="left:1644.70px;top:523.56px;line-height:40px;font-size:30px;color:#2b3246;letter-spacing:0.500px;">0</span>
<span style="left:1904.50px;top:523.56px;line-height:40px;font-size:30px;color:#2b3246;letter-spacing:-0.170px;">$ 45,000.00</span>
<span style="left:2119.30px;top:523.56px;line-height:40px;font-size:30px;color:#2b3246;letter-spacing:-2.144px;">Closed Won</span>
<span style="left:2518.60px;top:523.56px;line-height:40px;font-size:30px;color:#2b3246;letter-spacing:-0.600px;">Dec 10, 2025</span>
<div class="cb" style="left:660px;top:599px;"></div>
<svg style="left:704px;top:590px;" width="172" height="48" viewBox="0 0 172 48"><path d="M9 0 H172 L149 24 L172 48 H9 Q0 48 0 39 V9 Q0 0 9 0 Z" fill="#fde9ea"/></svg><svg style="left:716px;top:600px;" width="24" height="28" viewBox="0 0 24 28" fill="none"><g stroke="#f65353" stroke-width="2.200" stroke-linecap="round" stroke-linejoin="round" fill="none">
<path d="M5.200 4.600 Q1.400 4.600 1.400 9 V20.200 Q1.400 24.600 5.800 24.600 H16.500 Q20.900 24.600 20.900 20.200 V9 Q20.900 4.600 17.200 4.600"/>
<path d="M8.400 5.800 H14"/><path d="M7 15 L10.300 18.200 L16.200 11.800"/></g><path d="M9.300 4.800 L11.200 2.300 L13.100 4.800 Z" fill="#f65353"/></svg><span style="left:748.00px;top:598.56px;line-height:32px;font-size:24.7px;color:#ee4646;font-weight:700;letter-spacing:-0.040px;">Dec 10</span>
<span style="left:994.80px;top:593.56px;line-height:40px;font-size:30px;color:#2b3246;letter-spacing:-0.147px;">Morlong Associates</span>
<span style="left:1611.10px;top:593.56px;line-height:40px;font-size:30px;color:#2b3246;letter-spacing:0.550px;">100</span>
<span style="left:1904.50px;top:593.56px;line-height:40px;font-size:30px;color:#2b3246;letter-spacing:-0.170px;">$ 35,000.00</span>
<span style="left:2119.30px;top:593.56px;line-height:40px;font-size:30px;color:#2b3246;letter-spacing:-2.144px;">Closed Won</span>
<span style="left:2518.60px;top:593.56px;line-height:40px;font-size:30px;color:#2b3246;letter-spacing:-0.418px;">Dec 11, 2025</span>
<div class="cb" style="left:660px;top:669px;"></div>
<svg style="left:704px;top:660px;" width="158" height="48" viewBox="0 0 158 48"><path d="M9 0 H158 L135 24 L158 48 H9 Q0 48 0 39 V9 Q0 0 9 0 Z" fill="#fde9ea"/></svg><svg style="left:716px;top:670px;" width="24" height="28" viewBox="0 0 24 28" fill="none"><g stroke="#f65353" stroke-width="2.200" stroke-linecap="round" stroke-linejoin="round" fill="none">
<path d="M5.200 4.600 Q1.400 4.600 1.400 9 V20.200 Q1.400 24.600 5.800 24.600 H16.500 Q20.900 24.600 20.900 20.200 V9 Q20.900 4.600 17.200 4.600"/>
<path d="M8.400 5.800 H14"/><path d="M7 15 L10.300 18.200 L16.200 11.800"/></g><path d="M9.300 4.800 L11.200 2.300 L13.100 4.800 Z" fill="#f65353"/></svg><span style="left:748.00px;top:668.56px;line-height:32px;font-size:24.7px;color:#ee4646;font-weight:700;letter-spacing:-0.250px;">Dec 7</span>
<span style="left:994.80px;top:663.56px;line-height:40px;font-size:30px;color:#2b3246;letter-spacing:-0.067px;">Chapman</span>
<span style="left:1627.20px;top:663.56px;line-height:40px;font-size:30px;color:#2b3246;letter-spacing:1.000px;">20</span>
<span style="left:1904.50px;top:663.56px;line-height:40px;font-size:30px;color:#2b3246;letter-spacing:-0.170px;">$ 70,000.00</span>
<span style="left:2119.30px;top:663.56px;line-height:40px;font-size:30px;color:#2b3246;letter-spacing:-2.144px;">Closed Won</span>
<span style="left:2518.60px;top:663.56px;line-height:40px;font-size:30px;color:#2b3246;letter-spacing:-0.660px;">Dec 9, 2025</span>
<div class="cb" style="left:660px;top:739px;"></div>
<svg style="left:704px;top:730px;" width="172" height="48" viewBox="0 0 172 48"><path d="M9 0 H172 L149 24 L172 48 H9 Q0 48 0 39 V9 Q0 0 9 0 Z" fill="#fde9ea"/></svg><svg style="left:716px;top:740px;" width="24" height="28" viewBox="0 0 24 28" fill="none"><g stroke="#f65353" stroke-width="2.200" stroke-linecap="round" stroke-linejoin="round" fill="none">
<path d="M5.200 4.600 Q1.400 4.600 1.400 9 V20.200 Q1.400 24.600 5.800 24.600 H16.500 Q20.900 24.600 20.900 20.200 V9 Q20.900 4.600 17.200 4.600"/>
<path d="M8.400 5.800 H14"/><path d="M7 15 L10.300 18.200 L16.200 11.800"/></g><path d="M9.300 4.800 L11.200 2.300 L13.100 4.800 Z" fill="#f65353"/></svg><span style="left:748.00px;top:738.56px;line-height:32px;font-size:24.7px;color:#ee4646;font-weight:700;letter-spacing:-0.040px;">Dec 10</span>
<span style="left:994.80px;top:733.56px;line-height:40px;font-size:30px;color:#2b3246;letter-spacing:-0.233px;">Printing Dimensions</span>
<span style="left:1628.20px;top:733.56px;line-height:40px;font-size:30px;color:#2b3246;">40</span>
<span style="left:1904.50px;top:733.56px;line-height:40px;font-size:30px;color:#2b3246;letter-spacing:-0.170px;">$ 25,000.00</span>
<span style="left:2119.30px;top:733.56px;line-height:40px;font-size:30px;color:#2b3246;letter-spacing:-2.144px;">Closed Won</span>
<span style="left:2518.60px;top:733.56px;line-height:40px;font-size:30px;color:#2b3246;letter-spacing:-0.600px;">Dec 14, 2025</span>
<div class="cb" style="left:660px;top:809px;"></div>
<svg style="left:704px;top:800px;" width="158" height="48" viewBox="0 0 158 48"><path d="M9 0 H158 L135 24 L158 48 H9 Q0 48 0 39 V9 Q0 0 9 0 Z" fill="#fde9ea"/></svg><svg style="left:716px;top:810px;" width="24" height="28" viewBox="0 0 24 28" fill="none"><g stroke="#f65353" stroke-width="2.200" stroke-linecap="round" stroke-linejoin="round" fill="none">
<path d="M5.200 4.600 Q1.400 4.600 1.400 9 V20.200 Q1.400 24.600 5.800 24.600 H16.500 Q20.900 24.600 20.900 20.200 V9 Q20.900 4.600 17.200 4.600"/>
<path d="M8.400 5.800 H14"/><path d="M7 15 L10.300 18.200 L16.200 11.800"/></g><path d="M9.300 4.800 L11.200 2.300 L13.100 4.800 Z" fill="#f65353"/></svg><span style="left:748.00px;top:808.56px;line-height:32px;font-size:24.7px;color:#ee4646;font-weight:700;letter-spacing:-0.250px;">Dec 6</span>
<span style="left:994.80px;top:803.56px;line-height:40px;font-size:30px;color:#2b3246;letter-spacing:-0.467px;">Feltz Printing Service</span>
<span style="left:1628.20px;top:803.56px;line-height:40px;font-size:30px;color:#2b3246;">40</span>
<span style="left:1904.50px;top:803.56px;line-height:40px;font-size:30px;color:#2b3246;letter-spacing:-0.170px;">$ 45,000.00</span>
<span style="right:459.40px;top:803.56px;line-height:40px;font-size:30px;color:#2b3246;letter-spacing:-0.400px;">Id. Decision Mak...</span>
<span style="left:2518.60px;top:803.56px;line-height:40px;font-size:30px;color:#2b3246;letter-spacing:-0.600px;">Dec 12, 2025</span>
<div class="cb" style="left:660px;top:879px;"></div>
<span style="left:994.80px;top:873.56px;line-height:40px;font-size:30px;color:#2b3246;letter-spacing:-0.040px;">Chemel</span>
<span style="left:1627.20px;top:873.56px;line-height:40px;font-size:30px;color:#2b3246;letter-spacing:1.000px;">54</span>
<span style="left:1904.50px;top:873.56px;line-height:40px;font-size:30px;color:#2b3246;letter-spacing:-0.170px;">$ 70,000.00</span>
<span style="left:2119.30px;top:873.56px;line-height:40px;font-size:30px;color:#2b3246;letter-spacing:-2.144px;">Closed Won</span>
<span style="left:2518.60px;top:873.56px;line-height:40px;font-size:30px;color:#2b3246;letter-spacing:-0.660px;">Dec 9, 2025</span>
<div class="cb" style="left:660px;top:949px;"></div>
<span style="left:994.80px;top:943.56px;line-height:40px;font-size:30px;color:#2b3246;letter-spacing:-0.740px;">Chanay</span>
<span style="left:1904.50px;top:943.56px;line-height:40px;font-size:30px;color:#2b3246;letter-spacing:-0.170px;">$ 55,000.00</span>
<span style="left:2119.30px;top:943.56px;line-height:40px;font-size:30px;color:#2b3246;letter-spacing:-0.715px;">Needs Analysis</span>
<span style="left:2518.60px;top:943.56px;line-height:40px;font-size:30px;color:#2b3246;letter-spacing:-0.600px;">Dec 10, 2025</span>
<div class="cb" style="left:660px;top:1019px;"></div>
<svg style="left:704px;top:1010px;" width="158" height="48" viewBox="0 0 158 48"><path d="M9 0 H158 L135 24 L158 48 H9 Q0 48 0 39 V9 Q0 0 9 0 Z" fill="#fde9ea"/></svg><svg style="left:716px;top:1020px;" width="24" height="28" viewBox="0 0 24 28" fill="none"><g stroke="#f65353" stroke-width="2.200" stroke-linecap="round" stroke-linejoin="round" fill="none">
<path d="M5.200 4.600 Q1.400 4.600 1.400 9 V20.200 Q1.400 24.600 5.800 24.600 H16.500 Q20.900 24.600 20.900 20.200 V9 Q20.900 4.600 17.200 4.600"/>
<path d="M8.400 5.800 H14"/><path d="M7 15 L10.300 18.200 L16.200 11.800"/></g><path d="M9.300 4.800 L11.200 2.300 L13.100 4.800 Z" fill="#f65353"/></svg><span style="left:748.00px;top:1018.56px;line-height:32px;font-size:24.7px;color:#ee4646;font-weight:700;letter-spacing:-0.250px;">Dec 9</span>
<span style="left:994.80px;top:1013.56px;line-height:40px;font-size:30px;color:#2b3246;letter-spacing:0.200px;">Benton</span>
<span style="left:1628.20px;top:1013.56px;line-height:40px;font-size:30px;color:#2b3246;">40</span>
<span style="left:1889.00px;top:1013.56px;line-height:40px;font-size:30px;color:#2b3246;letter-spacing:-0.200px;">$ 250,000.00</span>
<span style="left:2119.30px;top:1013.56px;line-height:40px;font-size:30px;color:#2b3246;letter-spacing:0.308px;">Qualification</span>
<span style="left:2518.60px;top:1013.56px;line-height:40px;font-size:30px;color:#2b3246;letter-spacing:-0.660px;">Dec 9, 2025</span>
<div style="left:585px;top:1398px;width:2263px;height:16px;background:#ececec;"></div>
<div style="left:585px;top:1398px;width:1413px;height:16px;background:#a6a6a6;border-radius:8px;"></div>
<div style="left:585px;top:1414px;width:2263px;height:2px;background:#dcdaf0;"></div>
<span style="left:616.30px;top:1426.56px;line-height:40px;font-size:30px;color:#2b3246;letter-spacing:-0.542px;">Total Records</span>
<span style="left:802.80px;top:1427.06px;line-height:40px;font-size:29px;color:#2b3246;font-weight:700;letter-spacing:-0.300px;">10</span>
<svg style="left:2623px;top:1435px;" width="16" height="26" viewBox="0 0 16 26" fill="none"><path d="M13.500 2.500 L3 13 L13.500 23.500" stroke="#a9acb8" stroke-width="3" stroke-linecap="round" stroke-linejoin="round"/></svg>
<svg style="left:2784px;top:1435px;" width="16" height="26" viewBox="0 0 16 26" fill="none"><path d="M2.500 2.500 L13 13 L2.500 23.500" stroke="#a9acb8" stroke-width="3" stroke-linecap="round" stroke-linejoin="round"/></svg>
<span style="left:2666.60px;top:1426.56px;line-height:40px;font-size:28px;color:#2b3246;font-weight:700;">1</span>
<span class="m" style="left:2686.20px;top:1426.56px;line-height:40px;font-size:28px;color:#64708f;letter-spacing:1.700px;">to</span>
<span style="left:2717.80px;top:1426.56px;line-height:40px;font-size:28px;color:#2b3246;font-weight:700;letter-spacing:-1.500px;">10</span>
<div style="left:2516px;top:1316px;width:148px;height:54px;background:linear-gradient(#5f7af6,#3f55d3);border-radius:27px;box-shadow:0 8px 22px rgba(90,100,240,.45);"></div>
<svg style="left:2546px;top:1332px;" width="22" height="22" viewBox="0 0 22 22" fill="none"><path d="M11 1.500 V20.500 M1.500 11 H20.500" stroke="#fff" stroke-width="3.200" stroke-linecap="round"/></svg>
<span style="left:2579.60px;top:1323.06px;line-height:40px;font-size:26.8px;color:#fff;font-weight:700;letter-spacing:-0.400px;">Deal</span>
<div style="left:1732px;top:292px;width:716px;height:716px;border-radius:50%;border:8px solid #5565f2;background:#eef0fa;overflow:hidden;"><div style="left:-20px;top:-20px;width:740px;height:740px;filter:blur(0.4px);"><div style="left:0;top:0;width:2880px;height:1562px;transform-origin:0 0;transform:translate(-1931.75px,-385.40px) scale(1.5);"><div style="left:126px;top:183px;width:2754px;height:90px;background:#fff;"></div><div style="left:583px;top:304px;width:2267px;height:1176px;background:#fff;border:2px solid #dcdaf0;border-radius:14px;"></div>
<div style="left:585px;top:368px;width:2263px;height:2px;background:#dcdaf0;"></div>
<div style="left:585px;top:438px;width:2263px;height:2px;background:#dcdaf0;"></div>
<div style="left:585px;top:508px;width:2263px;height:2px;background:#dcdaf0;"></div>
<div style="left:585px;top:578px;width:2263px;height:2px;background:#dcdaf0;"></div>
<div style="left:585px;top:648px;width:2263px;height:2px;background:#dcdaf0;"></div>
<div style="left:585px;top:718px;width:2263px;height:2px;background:#dcdaf0;"></div>
<div style="left:585px;top:788px;width:2263px;height:2px;background:#dcdaf0;"></div>
<div style="left:585px;top:858px;width:2263px;height:2px;background:#dcdaf0;"></div>
<div style="left:585px;top:928px;width:2263px;height:2px;background:#dcdaf0;"></div>
<div style="left:585px;top:998px;width:2263px;height:2px;background:#dcdaf0;"></div>
<div style="left:585px;top:1068px;width:2263px;height:2px;background:#dcdaf0;"></div>
<div style="left:962px;top:306px;width:2px;height:764px;background:#dcdaf0;"></div>
<div style="left:1362px;top:318px;width:2px;height:39px;background:#dcdaf0;"></div>
<div style="left:1362px;top:370px;width:2px;height:700px;background:#dcdaf0;"></div>
<div style="left:1686px;top:318px;width:2px;height:39px;background:#dcdaf0;"></div>
<div style="left:1686px;top:370px;width:2px;height:700px;background:#dcdaf0;"></div>
<div style="left:2086px;top:318px;width:2px;height:39px;background:#dcdaf0;"></div>
<div style="left:2086px;top:370px;width:2px;height:700px;background:#dcdaf0;"></div>
<div style="left:2486px;top:318px;width:2px;height:39px;background:#dcdaf0;"></div>
<div style="left:2486px;top:370px;width:2px;height:700px;background:#dcdaf0;"></div>
<div class="cb" style="left:662px;top:322px;"></div>
<span class="m" style="left:995.90px;top:316.06px;line-height:40px;font-size:28.8px;color:#2b3246;letter-spacing:-0.150px;">Deal Name</span>
<span class="m" style="left:1163.30px;top:318.06px;line-height:40px;font-size:23px;color:#2b3246;letter-spacing:0.250px;">All</span>
<svg style="left:1199px;top:333px;" width="20" height="12" viewBox="0 0 20 12" fill="none"><path d="M0.500 0.500 H19.500 L10 11 Z" fill="#9a9a9a"/></svg>
<span class="m" style="left:1396.00px;top:316.06px;line-height:40px;font-size:28.8px;color:#2b3246;letter-spacing:0.608px;">Meddicc Score</span>
<span class="m" style="left:1720.50px;top:316.06px;line-height:40px;font-size:28.8px;color:#2b3246;letter-spacing:1.200px;">Amount</span>
<span class="m" style="left:2120.00px;top:316.06px;line-height:40px;font-size:28.8px;color:#2b3246;letter-spacing:-0.750px;">Stage</span>
<span class="m" style="left:2520.50px;top:316.06px;line-height:40px;font-size:28.8px;color:#2b3246;letter-spacing:0.227px;">Closing Date</span>
<div style="left:2770px;top:306px;width:78px;height:62px;background:#fff;border-left:2px solid #dcdaf0;border-bottom:3px solid #d9d6ee;border-top-right-radius:16px;"></div>
<svg style="left:2794px;top:322px;" width="32" height="28" viewBox="0 0 32 28" fill="none"><path d="M2 5.500 H13 M26 5.500 H30 M2 22 H5 M17 22 H30" stroke="#2a3147" stroke-width="2.600" stroke-linecap="round"/>
<circle cx="20.500" cy="5.500" r="4.300" fill="#2a3147"/><circle cx="10.500" cy="22" r="4.300" fill="#2a3147"/><path d="M13 5.500 H26 M5 22 H17" stroke="#2a3147" stroke-width="2.600"/></svg>
<div class="cb" style="left:660px;top:389px;"></div>
<span style="left:994.80px;top:383.56px;line-height:40px;font-size:30px;color:#2b3246;letter-spacing:0.067px;">King</span>
<span style="left:1627.20px;top:383.56px;line-height:40px;font-size:30px;color:#2b3246;letter-spacing:1.000px;">20</span>
<span style="left:1904.50px;top:383.56px;line-height:40px;font-size:30px;color:#2b3246;letter-spacing:-0.170px;">$ 60,000.00</span>
<span style="right:459.40px;top:383.56px;line-height:40px;font-size:30px;color:#2b3246;letter-spacing:-0.400px;">Id. Decision Mak...</span>
<span style="left:2518.60px;top:383.56px;line-height:40px;font-size:30px;color:#2b3246;letter-spacing:-0.418px;">Dec 11, 2025</span>
<div class="cb" style="left:660px;top:459px;"></div>
<svg style="left:704px;top:450px;" width="172" height="48" viewBox="0 0 172 48"><path d="M9 0 H172 L149 24 L172 48 H9 Q0 48 0 39 V9 Q0 0 9 0 Z" fill="#fde9ea"/></svg><svg style="left:716px;top:460px;" width="24" height="28" viewBox="0 0 24 28" fill="none"><g stroke="#f65353" stroke-width="2.200" stroke-linecap="round" stroke-linejoin="round" fill="none">
<path d="M5.200 4.600 Q1.400 4.600 1.400 9 V20.200 Q1.400 24.600 5.800 24.600 H16.500 Q20.900 24.600 20.900 20.200 V9 Q20.900 4.600 17.200 4.600"/>
<path d="M8.400 5.800 H14"/><path d="M7 15 L10.300 18.200 L16.200 11.800"/></g><path d="M9.300 4.800 L11.200 2.300 L13.100 4.800 Z" fill="#f65353"/></svg><span style="left:748.00px;top:458.56px;line-height:32px;font-size:24.7px;color:#ee4646;font-weight:700;letter-spacing:-0.040px;">Dec 10</span>
<span style="left:994.80px;top:453.56px;line-height:40px;font-size:30px;color:#2b3246;letter-spacing:-0.337px;">Truhlar And Truhlar Attys</span>
<span style="left:1628.80px;top:453.56px;line-height:40px;font-size:30px;color:#2b3246;letter-spacing:-0.600px;">15</span>
<span style="left:1904.50px;top:453.56px;line-height:40px;font-size:30px;color:#2b3246;letter-spacing:-0.170px;">$ 45,000.00</span>
<span style="left:2119.30px;top:453.56px;line-height:40px;font-size:30px;color:#2b3246;letter-spacing:-2.144px;">Closed Won</span>
<span style="left:2518.60px;top:453.56px;line-height:40px;font-size:30px;color:#2b3246;letter-spacing:-0.660px;">Dec 9, 2025</span>
<div class="cb" style="left:660px;top:529px;"></div>
<svg style="left:704px;top:520px;" width="158" height="48" viewBox="0 0 158 48"><path d="M9 0 H158 L135 24 L158 48 H9 Q0 48 0 39 V9 Q0 0 9 0 Z" fill="#fde9ea"/></svg><svg style="left:716px;top:530px;" width="24" height="28" viewBox="0 0 24 28" fill="none"><g stroke="#f65353" stroke-width="2.200" stroke-linecap="round" stroke-linejoin="round" fill="none">
<path d="M5.200 4.600 Q1.400 4.600 1.400 9 V20.200 Q1.400 24.600 5.800 24.600 H16.500 Q20.900 24.600 20.900 20.200 V9 Q20.900 4.600 17.200 4.600"/>
<path d="M8.400 5.800 H14"/><path d="M7 15 L10.300 18.200 L16.200 11.800"/></g><path d="M9.300 4.800 L11.200 2.300 L13.100 4.800 Z" fill="#f65353"/></svg><span style="left:748.00px;top:528.56px;line-height:32px;font-size:24.7px;color:#ee4646;font-weight:700;letter-spacing:-0.250px;">Dec 9</span>
<span style="left:994.80px;top:523.56px;line-height:40px;font-size:30px;color:#2b3246;letter-spacing:-0.680px;">Commercial Press</span>
<span style="left:1644.70px;top:523.56px;line-height:40px;font-size:30px;color:#2b3246;letter-spacing:0.500px;">0</span>
<span style="left:1904.50px;top:523.56px;line-height:40px;font-size:30px;color:#2b3246;letter-spacing:-0.170px;">$ 45,000.00</span>
<span style="left:2119.30px;top:523.56px;line-height:40px;font-size:30px;color:#2b3246;letter-spacing:-2.144px;">Closed Won</span>
<span style="left:2518.60px;top:523.56px;line-height:40px;font-size:30px;color:#2b3246;letter-spacing:-0.600px;">Dec 10, 2025</span>
<div class="cb" style="left:660px;top:599px;"></div>
<svg style="left:704px;top:590px;" width="172" height="48" viewBox="0 0 172 48"><path d="M9 0 H172 L149 24 L172 48 H9 Q0 48 0 39 V9 Q0 0 9 0 Z" fill="#fde9ea"/></svg><svg style="left:716px;top:600px;" width="24" height="28" viewBox="0 0 24 28" fill="none"><g stroke="#f65353" stroke-width="2.200" stroke-linecap="round" stroke-linejoin="round" fill="none">
<path d="M5.200 4.600 Q1.400 4.600 1.400 9 V20.200 Q1.400 24.600 5.800 24.600 H16.500 Q20.900 24.600 20.900 20.200 V9 Q20.900 4.600 17.200 4.600"/>
<path d="M8.400 5.800 H14"/><path d="M7 15 L10.300 18.200 L16.200 11.800"/></g><path d="M9.300 4.800 L11.200 2.300 L13.100 4.800 Z" fill="#f65353"/></svg><span style="left:748.00px;top:598.56px;line-height:32px;font-size:24.7px;color:#ee4646;font-weight:700;letter-spacing:-0.040px;">Dec 10</span>
<span style="left:994.80px;top:593.56px;line-height:40px;font-size:30px;color:#2b3246;letter-spacing:-0.147px;">Morlong Associates</span>
<span style="left:1611.10px;top:593.56px;line-height:40px;font-size:30px;color:#2b3246;letter-spacing:0.550px;">100</span>
<span style="left:1904.50px;top:593.56px;line-height:40px;font-size:30px;color:#2b3246;letter-spacing:-0.170px;">$ 35,000.00</span>
<span style="left:2119.30px;top:593.56px;line-height:40px;font-size:30px;color:#2b3246;letter-spacing:-2.144px;">Closed Won</span>
<span style="left:2518.60px;top:593.56px;line-height:40px;font-size:30px;color:#2b3246;letter-spacing:-0.418px;">Dec 11, 2025</span>
<div class="cb" style="left:660px;top:669px;"></div>
<svg style="left:704px;top:660px;" width="158" height="48" viewBox="0 0 158 48"><path d="M9 0 H158 L135 24 L158 48 H9 Q0 48 0 39 V9 Q0 0 9 0 Z" fill="#fde9ea"/></svg><svg style="left:716px;top:670px;" width="24" height="28" viewBox="0 0 24 28" fill="none"><g stroke="#f65353" stroke-width="2.200" stroke-linecap="round" stroke-linejoin="round" fill="none">
<path d="M5.200 4.600 Q1.400 4.600 1.400 9 V20.200 Q1.400 24.600 5.800 24.600 H16.500 Q20.900 24.600 20.900 20.200 V9 Q20.900 4.600 17.200 4.600"/>
<path d="M8.400 5.800 H14"/><path d="M7 15 L10.300 18.200 L16.200 11.800"/></g><path d="M9.300 4.800 L11.200 2.300 L13.100 4.800 Z" fill="#f65353"/></svg><span style="left:748.00px;top:668.56px;line-height:32px;font-size:24.7px;color:#ee4646;font-weight:700;letter-spacing:-0.250px;">Dec 7</span>
<span style="left:994.80px;top:663.56px;line-height:40px;font-size:30px;color:#2b3246;letter-spacing:-0.067px;">Chapman</span>
<span style="left:1627.20px;top:663.56px;line-height:40px;font-size:30px;color:#2b3246;letter-spacing:1.000px;">20</span>
<span style="left:1904.50px;top:663.56px;line-height:40px;font-size:30px;color:#2b3246;letter-spacing:-0.170px;">$ 70,000.00</span>
<span style="left:2119.30px;top:663.56px;line-height:40px;font-size:30px;color:#2b3246;letter-spacing:-2.144px;">Closed Won</span>
<span style="left:2518.60px;top:663.56px;line-height:40px;font-size:30px;color:#2b3246;letter-spacing:-0.660px;">Dec 9, 2025</span>
<div class="cb" style="left:660px;top:739px;"></div>
<svg style="left:704px;top:730px;" width="172" height="48" viewBox="0 0 172 48"><path d="M9 0 H172 L149 24 L172 48 H9 Q0 48 0 39 V9 Q0 0 9 0 Z" fill="#fde9ea"/></svg><svg style="left:716px;top:740px;" width="24" height="28" viewBox="0 0 24 28" fill="none"><g stroke="#f65353" stroke-width="2.200" stroke-linecap="round" stroke-linejoin="round" fill="none">
<path d="M5.200 4.600 Q1.400 4.600 1.400 9 V20.200 Q1.400 24.600 5.800 24.600 H16.500 Q20.900 24.600 20.900 20.200 V9 Q20.900 4.600 17.200 4.600"/>
<path d="M8.400 5.800 H14"/><path d="M7 15 L10.300 18.200 L16.200 11.800"/></g><path d="M9.300 4.800 L11.200 2.300 L13.100 4.800 Z" fill="#f65353"/></svg><span style="left:748.00px;top:738.56px;line-height:32px;font-size:24.7px;color:#ee4646;font-weight:700;letter-spacing:-0.040px;">Dec 10</span>
<span style="left:994.80px;top:733.56px;line-height:40px;font-size:30px;color:#2b3246;letter-spacing:-0.233px;">Printing Dimensions</span>
<span style="left:1628.20px;top:733.56px;line-height:40px;font-size:30px;color:#2b3246;">40</span>
<span style="left:1904.50px;top:733.56px;line-height:40px;font-size:30px;color:#2b3246;letter-spacing:-0.170px;">$ 25,000.00</span>
<span style="left:2119.30px;top:733.56px;line-height:40px;font-size:30px;color:#2b3246;letter-spacing:-2.144px;">Closed Won</span>
<span style="left:2518.60px;top:733.56px;line-height:40px;font-size:30px;color:#2b3246;letter-spacing:-0.600px;">Dec 14, 2025</span>
<div class="cb" style="left:660px;top:809px;"></div>
<svg style="left:704px;top:800px;" width="158" height="48" viewBox="0 0 158 48"><path d="M9 0 H158 L135 24 L158 48 H9 Q0 48 0 39 V9 Q0 0 9 0 Z" fill="#fde9ea"/></svg><svg style="left:716px;top:810px;" width="24" height="28" viewBox="0 0 24 28" fill="none"><g stroke="#f65353" stroke-width="2.200" stroke-linecap="round" stroke-linejoin="round" fill="none">
<path d="M5.200 4.600 Q1.400 4.600 1.400 9 V20.200 Q1.400 24.600 5.800 24.600 H16.500 Q20.900 24.600 20.900 20.200 V9 Q20.900 4.600 17.200 4.600"/>
<path d="M8.400 5.800 H14"/><path d="M7 15 L10.300 18.200 L16.200 11.800"/></g><path d="M9.300 4.800 L11.200 2.300 L13.100 4.800 Z" fill="#f65353"/></svg><span style="left:748.00px;top:808.56px;line-height:32px;font-size:24.7px;color:#ee4646;font-weight:700;letter-spacing:-0.250px;">Dec 6</span>
<span style="left:994.80px;top:803.56px;line-height:40px;font-size:30px;color:#2b3246;letter-spacing:-0.467px;">Feltz Printing Service</span>
<span style="left:1628.20px;top:803.56px;line-height:40px;font-size:30px;color:#2b3246;">40</span>
<span style="left:1904.50px;top:803.56px;line-height:40px;font-size:30px;color:#2b3246;letter-spacing:-0.170px;">$ 45,000.00</span>
<span style="right:459.40px;top:803.56px;line-height:40px;font-size:30px;color:#2b3246;letter-spacing:-0.400px;">Id. Decision Mak...</span>
<span style="left:2518.60px;top:803.56px;line-height:40px;font-size:30px;color:#2b3246;letter-spacing:-0.600px;">Dec 12, 2025</span>
<div class="cb" style="left:660px;top:879px;"></div>
<span style="left:994.80px;top:873.56px;line-height:40px;font-size:30px;color:#2b3246;letter-spacing:-0.040px;">Chemel</span>
<span style="left:1627.20px;top:873.56px;line-height:40px;font-size:30px;color:#2b3246;letter-spacing:1.000px;">54</span>
<span style="left:1904.50px;top:873.56px;line-height:40px;font-size:30px;color:#2b3246;letter-spacing:-0.170px;">$ 70,000.00</span>
<span style="left:2119.30px;top:873.56px;line-height:40px;font-size:30px;color:#2b3246;letter-spacing:-2.144px;">Closed Won</span>
<span style="left:2518.60px;top:873.56px;line-height:40px;font-size:30px;color:#2b3246;letter-spacing:-0.660px;">Dec 9, 2025</span>
<div class="cb" style="left:660px;top:949px;"></div>
<span style="left:994.80px;top:943.56px;line-height:40px;font-size:30px;color:#2b3246;letter-spacing:-0.740px;">Chanay</span>
<span style="left:1904.50px;top:943.56px;line-height:40px;font-size:30px;color:#2b3246;letter-spacing:-0.170px;">$ 55,000.00</span>
<span style="left:2119.30px;top:943.56px;line-height:40px;font-size:30px;color:#2b3246;letter-spacing:-0.715px;">Needs Analysis</span>
<span style="left:2518.60px;top:943.56px;line-height:40px;font-size:30px;color:#2b3246;letter-spacing:-0.600px;">Dec 10, 2025</span>
<div class="cb" style="left:660px;top:1019px;"></div>
<svg style="left:704px;top:1010px;" width="158" height="48" viewBox="0 0 158 48"><path d="M9 0 H158 L135 24 L158 48 H9 Q0 48 0 39 V9 Q0 0 9 0 Z" fill="#fde9ea"/></svg><svg style="left:716px;top:1020px;" width="24" height="28" viewBox="0 0 24 28" fill="none"><g stroke="#f65353" stroke-width="2.200" stroke-linecap="round" stroke-linejoin="round" fill="none">
<path d="M5.200 4.600 Q1.400 4.600 1.400 9 V20.200 Q1.400 24.600 5.800 24.600 H16.500 Q20.900 24.600 20.900 20.200 V9 Q20.900 4.600 17.200 4.600"/>
<path d="M8.400 5.800 H14"/><path d="M7 15 L10.300 18.200 L16.200 11.800"/></g><path d="M9.300 4.800 L11.200 2.300 L13.100 4.800 Z" fill="#f65353"/></svg><span style="left:748.00px;top:1018.56px;line-height:32px;font-size:24.7px;color:#ee4646;font-weight:700;letter-spacing:-0.250px;">Dec 9</span>
<span style="left:994.80px;top:1013.56px;line-height:40px;font-size:30px;color:#2b3246;letter-spacing:0.200px;">Benton</span>
<span style="left:1628.20px;top:1013.56px;line-height:40px;font-size:30px;color:#2b3246;">40</span>
<span style="left:1889.00px;top:1013.56px;line-height:40px;font-size:30px;color:#2b3246;letter-spacing:-0.200px;">$ 250,000.00</span>
<span style="left:2119.30px;top:1013.56px;line-height:40px;font-size:30px;color:#2b3246;letter-spacing:0.308px;">Qualification</span>
<span style="left:2518.60px;top:1013.56px;line-height:40px;font-size:30px;color:#2b3246;letter-spacing:-0.660px;">Dec 9, 2025</span></div></div></div>
<div style="left:126px;top:1494px;width:2754px;height:12px;background:linear-gradient(rgba(140,140,170,0),rgba(140,140,170,.2));"></div>
<div style="left:0px;top:1506px;width:2880px;height:56px;background:#fff;"></div>
<div style="left:126px;top:1505px;width:2754px;height:1.5px;background:#cdcdda;"></div>
<svg style="left:66px;top:1516px;" width="30" height="28" viewBox="0 0 30 28" fill="none"><ellipse cx="18.8" cy="11" rx="11.2" ry="9.4" fill="#9b9b9b"/><path d="M22 18 L26.600 23.300 L25.300 15 Z" fill="#9b9b9b"/>
<path d="M7.300 9.300 Q1.800 13.500 3.200 18.600 Q4.300 21.600 7.200 22.600 L6.200 26 L12 22.900 Q14.500 22.600 16.300 21.600 Q6.700 19.500 7.300 9.300 Z" fill="#9b9b9b"/></svg>
<span style="left:61.00px;top:1540.06px;line-height:20px;font-size:17.6px;color:#9b9b9b;letter-spacing:-0.850px;">Chats</span>
<svg style="left:246px;top:1517px;" width="30" height="25" viewBox="0 0 30 25" fill="none"><g fill="#9b9b9b"><circle cx="15" cy="8.500" r="4.800"/><path d="M6 24.500 Q5 14.500 15 14.500 Q25 14.500 24 24.500 Z"/>
<circle cx="6" cy="5" r="3.200"/><circle cx="24" cy="5" r="3.200"/><circle cx="4" cy="12.500" r="2.800"/><circle cx="26" cy="12.500" r="2.800"/>
<path d="M0.500 22 Q0 16 5 16 Q6.500 16 7 16.500 Q5 19 5 22 Z"/><path d="M29.500 22 Q30 16 25 16 Q23.500 16 23 16.500 Q25 19 25 22 Z"/></g></svg>
<span style="left:225.55px;top:1540.06px;line-height:20px;font-size:17.6px;color:#9b9b9b;letter-spacing:-0.814px;">Channels</span>
<svg style="left:427px;top:1516px;" width="24" height="26" viewBox="0 0 24 26" fill="none"><circle cx="12" cy="7" r="6" fill="#9b9b9b"/><path d="M0.500 25.500 Q0 13.500 12 13.500 Q24 13.500 23.500 25.500 Z" fill="#9b9b9b"/></svg>
<span style="left:405.65px;top:1540.06px;line-height:20px;font-size:17.6px;color:#9b9b9b;letter-spacing:-0.471px;">Contacts</span>
<div style="left:520px;top:1507px;width:2px;height:55px;background:#e3e3e3;box-shadow:-2px 0 4px rgba(0,0,0,.06);"></div>
<span style="left:541.30px;top:1513.06px;line-height:40px;font-size:25.2px;color:#a9a9a9;letter-spacing:-0.371px;">Here is your Smart Chat (Ctrl+Space)</span>
<div style="left:1612px;top:1506px;width:1208px;height:2px;background:#c4c4d3;"></div>
<div style="left:1612px;top:1507px;width:2px;height:55px;background:#cfcfde;"></div>
<div style="left:2013px;top:1507px;width:2px;height:55px;background:#cfcfde;"></div>
<div style="left:2112px;top:1507px;width:2px;height:55px;background:#cfcfde;"></div>
<div style="left:2210px;top:1507px;width:2px;height:55px;background:#cfcfde;"></div>
<div style="left:2308px;top:1507px;width:2px;height:55px;background:#cfcfde;"></div>
<div style="left:2406px;top:1507px;width:2px;height:55px;background:#cfcfde;"></div>
<div style="left:2504px;top:1507px;width:2px;height:55px;background:#cfcfde;"></div>
<div style="left:2602px;top:1507px;width:2px;height:55px;background:#cfcfde;"></div>
<svg style="left:1646px;top:1518.5px;" width="34" height="32" viewBox="0 0 34 32" fill="none"><g stroke="#2a3147" stroke-width="3" stroke-linecap="round" stroke-linejoin="round" fill="none">
<path d="M13 27.3 H8 Q3 27.3 3 22.3 V8 Q3 3 8 3 H23.700 Q28.700 3 28.700 8 V11"/><path d="M9.500 9.500 L13.500 13 L9.500 16.500"/><path d="M9.500 21 H15"/></g>
<circle cx="25.300" cy="22.500" r="6.700" fill="#2a3147"/><path d="M23.600 18.300 V26.700 L29.800 22.500 Z" fill="#fff"/></svg>
<div style="left:1710px;top:1506px;width:304px;height:56px;background:linear-gradient(90deg,#a873e6 0%,#7474e4 55%,#7477e6 100%);border-top:2px solid #fff;"></div>
<svg style="left:1726px;top:1516.5px;" width="30" height="30" viewBox="0 0 32 32" fill="none"><g stroke="#fff" stroke-width="3" stroke-linecap="round" stroke-linejoin="round" fill="none">
<path d="M14 3.500 H8 Q2.500 3.500 2.500 9 V23 Q2.500 28.500 8 28.500 H22 Q27.500 28.500 27.500 23 V17"/></g><path d="M11.500 19.500 L13.500 13.500 L25.500 2.500 L30 6.500 L18 18 Z" fill="#fff"/></svg>
<span style="left:1765.20px;top:1511.06px;line-height:40px;font-size:25.2px;color:#fff;font-weight:700;letter-spacing:-0.765px;">Feedback on New UI</span>
<svg style="left:2044.0px;top:1518.5px;" width="38.0" height="38.0" viewBox="0 0 38 38" fill="none"><g stroke="#2a3147" stroke-width="3.200" stroke-linecap="round" stroke-linejoin="round" fill="none">
<path d="M4 12.500 H12 L27 5 V29 L12 22.500 H4 Z"/><path d="M8 23 V33"/><path d="M31 13 Q34 17 31 21"/></g></svg>
<svg style="left:2144.0px;top:1518.5px;" width="36.0" height="36.0" viewBox="0 0 36 36" fill="none"><g stroke="#2a3147" stroke-width="3" stroke-linecap="round" stroke-linejoin="round" fill="none">
<path d="M20 4 H11 Q3.500 4 3.500 11.500 V24.500 Q3.500 32 11 32 H23 Q30.500 32 30.500 24.500 V15"/><path d="M9.500 23 L15 17.500 L19.500 21 L25.500 14.500"/></g>
<circle cx="28.500" cy="5.500" r="3.300" fill="#f04444"/></svg>
<svg style="left:2242.0px;top:1519.5px;" width="36.0" height="36.0" viewBox="0 0 36 36" fill="none"><g stroke="#2a3147" stroke-width="3.200" stroke-linecap="round" stroke-linejoin="round" fill="none">
<path d="M16 7.500 H30 V25 L23.500 31.500 H8 V16"/><path d="M5 5 L14 14"/></g><circle cx="5.500" cy="5.500" r="4" fill="#2a3147"/><path d="M30 25 H23.500 V31.500 Z" fill="#2a3147"/></svg>
<svg style="left:2339.5px;top:1518.8px;" width="35.3" height="31.6" viewBox="0 0 38 34" fill="none"><path d="M2.6 10.2 H11.5 Q13.8 10.2 12.6 12.2 L2.6 28 Q1.2 30.4 4 30.4 H17 Q18.3 30.4 19 29.3 L30 12.6 Q30.8 11.4 31.3 12.8 L35.7 28.4 Q36.2 30.4 34.2 29.8 L15.6 22.9 Q13.2 22 14.5 19.9 L20.8 11.8" stroke="#2a3147" stroke-width="3.3" stroke-linecap="round" stroke-linejoin="round" fill="none"/>
<circle cx="23.7" cy="5.8" r="2.05" fill="#2a3147"/></svg>
<svg style="left:2437.0px;top:1517.5px;" width="38.0" height="38.0" viewBox="0 0 38 38" fill="none"><g stroke="#2a3147" stroke-width="3.200" stroke-linecap="round" stroke-linejoin="round" fill="none">
<circle cx="19" cy="21" r="13.500"/><path d="M19 14 V22 H25"/></g>
<path d="M2 9 Q2 2 10 2.500 Z M36 9 Q36 2 28 2.500 Z" fill="#2a3147" stroke="#2a3147" stroke-width="2.500" stroke-linejoin="round"/></svg>
<svg style="left:2534.0px;top:1518.5px;" width="38.0" height="36.0" viewBox="0 0 38 36" fill="none"><g stroke="#2a3147" stroke-width="3.200" stroke-linecap="round" stroke-linejoin="round" fill="none">
<path d="M7.500 22 A13.500 13.500 0 1 0 14 7"/><path d="M2 18 L7.500 23.500 L12.500 17.500"/><path d="M21 11.500 V19.500 H28"/></g></svg>
<svg style="left:2633.0px;top:1517.5px;" width="36.0" height="36.0" viewBox="0 0 36 36" fill="none"><circle cx="18" cy="18" r="15" stroke="#2a3147" stroke-width="3.200"/><circle cx="18" cy="9.500" r="2.600" fill="#2a3147"/>
<path d="M9.500 13.500 L15.500 15 H20.500 L26.500 13.500 M15.500 15 V20 L13.500 28 M20.500 15 V20 L22.500 28 M15.500 20 H20.500" stroke="#2a3147" stroke-width="2.800" stroke-linecap="round" stroke-linejoin="round" fill="#2a3147"/></svg>
<div style="left:2701px;top:1508px;width:119px;height:54px;background:linear-gradient(90deg,#a873e6 0%,#7474e4 60%,#7477e6 100%);"></div>
<svg style="left:2720px;top:1518px;" width="34" height="34" viewBox="0 0 34 34" fill="none"><circle cx="17" cy="17" r="14.4" stroke="#fff" stroke-width="2.800"/>
<path d="M12.300 13.200 Q12.300 8.800 17 8.800 Q21.700 8.800 21.700 12.600 Q21.700 15 17 17.600 V19.200" stroke="#fff" stroke-width="3.100" stroke-linecap="round" fill="none"/><circle cx="17" cy="24.200" r="2" fill="#fff"/></svg>
<span style="left:2754.10px;top:1513.06px;line-height:40px;font-size:23px;color:#fff;font-weight:700;letter-spacing:-0.900px;">Help</span>
<svg style="left:2835px;top:1517px;" width="36" height="36" viewBox="0 0 36 36" fill="none"><g stroke="#8a8a8a" stroke-width="2.200" stroke-linejoin="round" fill="#fff">
<rect x="13" y="2" width="20" height="22" rx="4" transform="rotate(8 23 13)"/><rect x="2" y="6" width="22" height="24" rx="5" transform="rotate(-6 13 18)"/>
<rect x="6.500" y="9" width="23" height="23" rx="5"/></g><path d="M11 18 H24 M11 24 H20" stroke="#8a8a8a" stroke-width="2.400" stroke-linecap="round"/></svg>
<svg style="left:0px;top:1506px;" width="58" height="56" viewBox="0 0 58 56" fill="none"><path d="M0 0 V56 H57 C30 55 14 50 7 40 C2 30 1 15 0 0 Z" fill="#0a0a04"/></svg>
<svg style="left:2822px;top:1506px;" width="58" height="56" viewBox="0 0 58 56" fill="none"><path d="M58 0 V56 H1 C28 55 44 50 51 40 C56 30 57 15 58 0 Z" fill="#23240c"/></svg>
</div></body></html>
